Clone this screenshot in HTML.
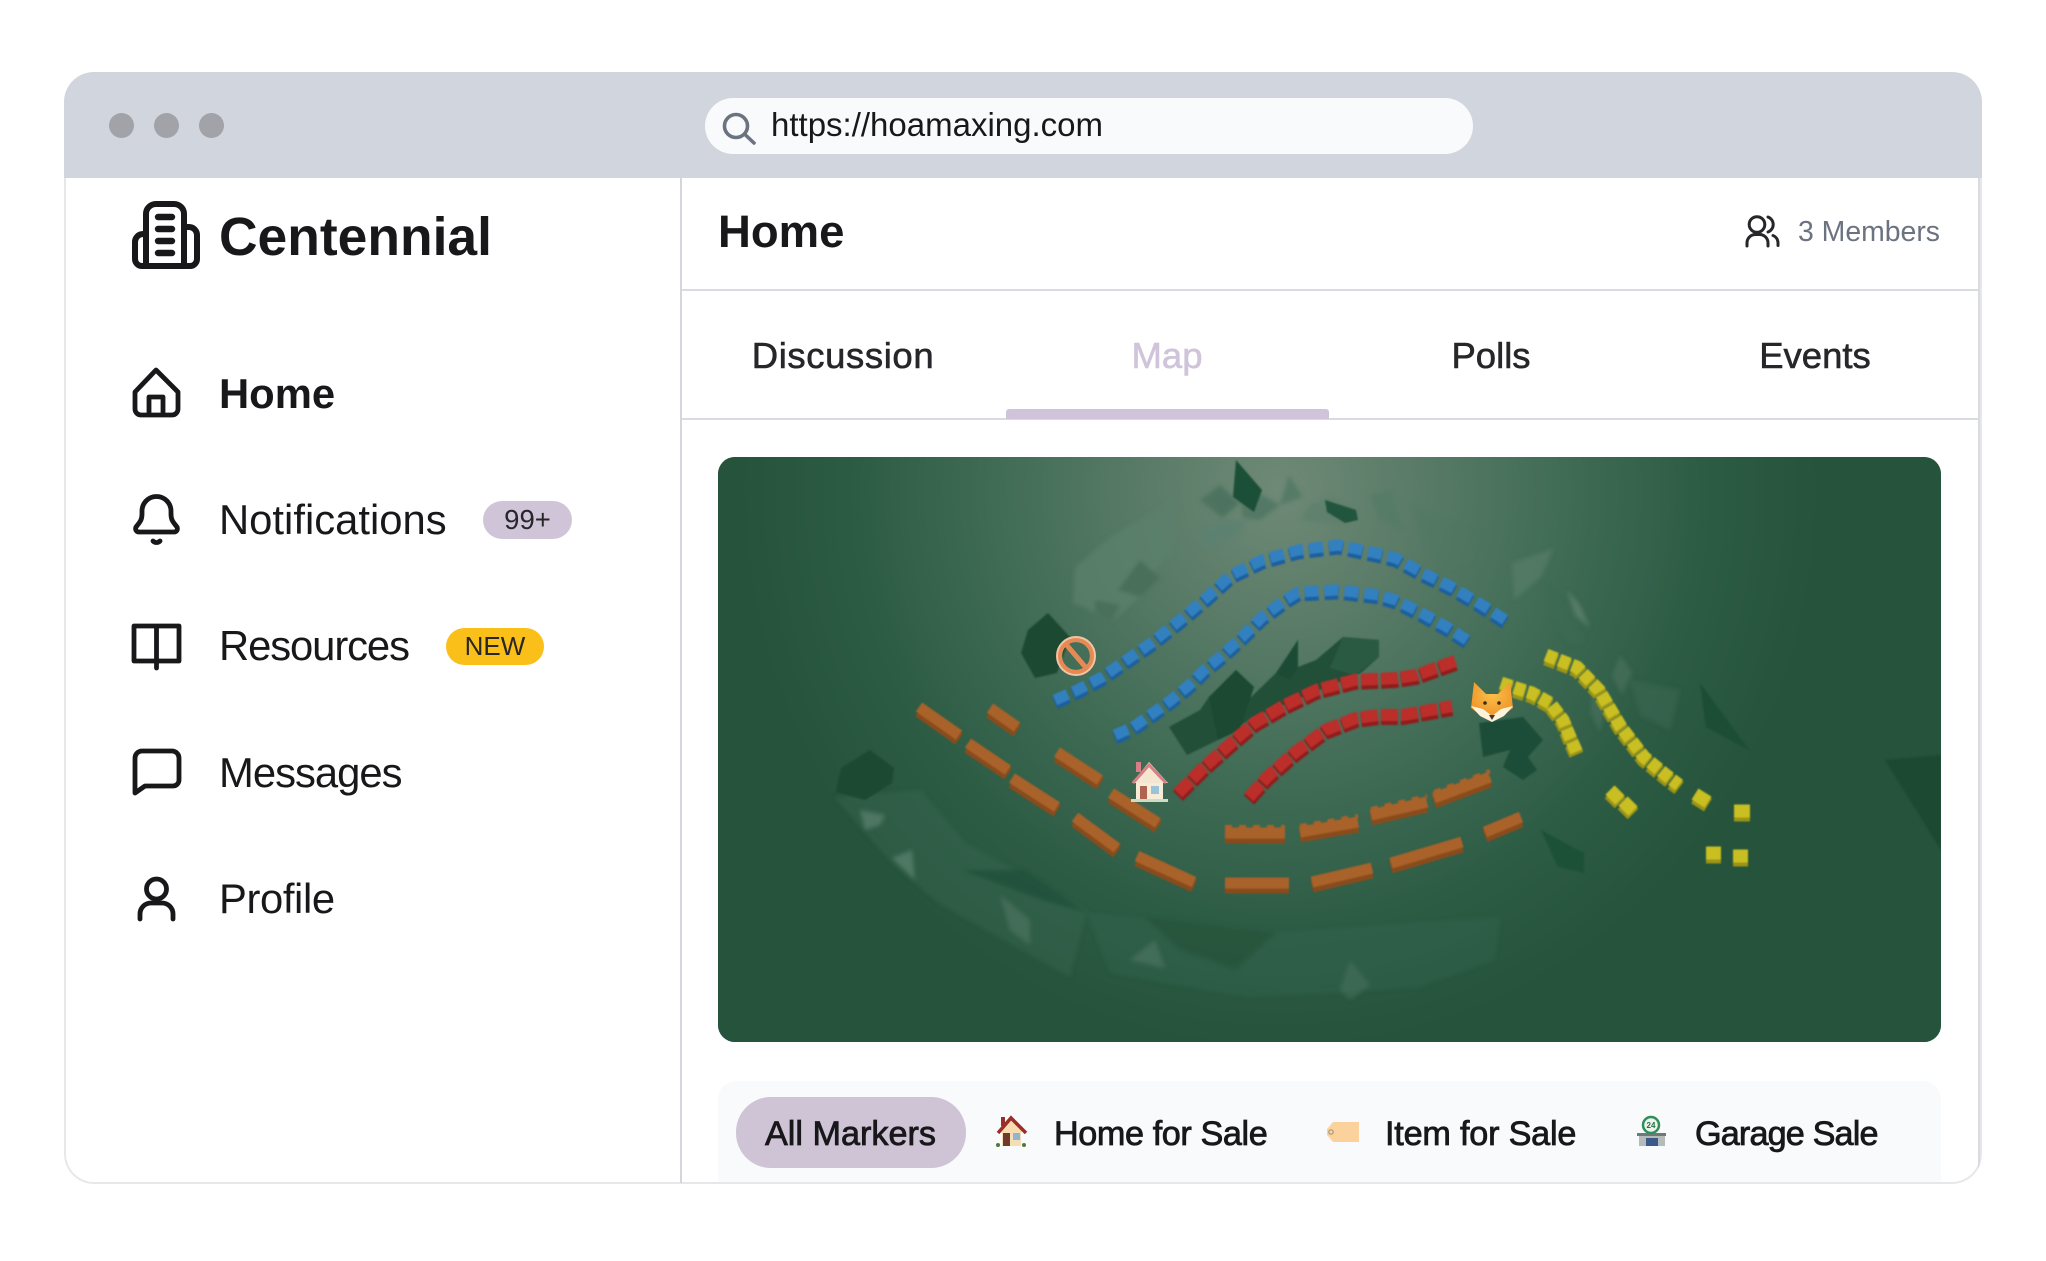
<!DOCTYPE html>
<html lang="en"><head><meta charset="utf-8"><title>Centennial</title>
<style>
html,body{margin:0;padding:0;width:2046px;height:1261px;background:#fff;overflow:hidden}
body{position:relative;font-family:"Liberation Sans",Arial,sans-serif;color:#111827}
.t{position:absolute;white-space:nowrap;line-height:60px;height:60px}
.c{text-align:center}
.nav{font-size:41.8px;left:219px;color:#18181b}
.tab{font-size:36.5px;-webkit-text-stroke:.6px currentColor;width:324px;top:326px}
.f{font-size:34.2px;top:1104px;-webkit-text-stroke:.8px #18181b;color:#18181b}
.abs{position:absolute}
svg.i{position:absolute;left:0;top:0;overflow:visible}
</style></head><body>

<div class="abs" style="left:64px;top:72px;width:1918px;height:1112px;border-radius:30px;overflow:hidden;background:#fff">
  <div class="abs" style="left:0;top:0;width:1918px;height:106px;background:#d1d5de"></div>
  <div class="abs" style="left:0;top:106px;width:1918px;height:1006px;box-sizing:border-box;border:2px solid #e5e7eb;border-top:none;border-radius:0 0 30px 30px"></div>
  <div class="abs" style="left:1914px;top:106px;width:2px;height:1004px;background:#d9dbe0"></div>
  <div class="abs" style="left:654px;top:1009px;width:1223px;height:101px;background:#f9fafb;border-radius:18px 18px 0 0"></div>
</div>

<div class="abs" style="left:109px;top:113px;width:25px;height:25px;border-radius:50%;background:#a1a3a9"></div>
<div class="abs" style="left:154px;top:113px;width:25px;height:25px;border-radius:50%;background:#a1a3a9"></div>
<div class="abs" style="left:199px;top:113px;width:25px;height:25px;border-radius:50%;background:#a1a3a9"></div>
<div class="abs" style="left:705px;top:98px;width:768px;height:56px;border-radius:28px;background:#f9fafb"></div>
<div class="t" style="left:771px;top:95px;font-size:33px;color:#18181b">https://hoamaxing.com</div>

<!-- dividers -->
<div class="abs" style="left:680px;top:178px;width:2px;height:1005px;background:#d4d6db"></div>
<div class="abs" style="left:682px;top:289px;width:1296px;height:2px;background:#d9dbe0"></div>
<div class="abs" style="left:682px;top:418px;width:1296px;height:2px;background:#d9dbe0"></div>
<div class="abs" style="left:1006px;top:409px;width:323px;height:10px;border-radius:3px 3px 0 0;background:#cfc4d9"></div>

<svg class="i" width="2046" height="1261" viewBox="0 0 2046 1261" fill="none" stroke="#18181b" stroke-width="4.8" stroke-linecap="round" stroke-linejoin="round">
  <!-- search -->
  <g stroke="#6b7280" stroke-width="3.600"><circle cx="736" cy="126" r="11.500"/><path d="M745 134.500L754 143"/></g>
  <!-- logo -->
  <g stroke-width="6">
    <path d="M146 265V214a10 10 0 0 1 10-10h18a10 10 0 0 1 10 10v51"/>
    <path d="M146 234h-3a8 8 0 0 0-8 8v17a7 7 0 0 0 7 7h48a7 7 0 0 0 7-7v-24a8 8 0 0 0-8-8h-5"/>
    <path d="M158 217h14M158 229h14M158 241h14M158 253h14" stroke-width="6.400"/>
  </g>
  <!-- home -->
  <path d="M135 392L156 370L178 392V409a6 6 0 0 1-6 6H141a6 6 0 0 1-6-6Z M149 414V397h14v17"/>
  <!-- bell -->
  <path d="M142 514V511a14.500 14.500 0 0 1 29 0V514c0 6 2 8 6 13 1 2 0 5-3 5H139c-3 0-4-3-3-5 4-5 6-7 6-13Z"/>
  <path d="M153 541c2 2 5 2 7 0"/>
  <!-- book -->
  <path d="M156.500 626H134V661H156.500H179V626H156.500V668"/>
  <!-- message -->
  <path d="M135 793V758a7 7 0 0 1 7-7H172a7 7 0 0 1 7 7V780a6 6 0 0 1-6 6H145Z"/>
  <!-- person -->
  <circle cx="156.500" cy="889" r="10"/>
  <path d="M140 919V914a11 11 0 0 1 11-11h11a11 11 0 0 1 11 11v5"/>
  <!-- members -->
  <g stroke="#27272a" stroke-width="3">
    <circle cx="1757" cy="224.500" r="7.800"/>
    <path d="M1768 217a8 8 0 0 1 0 15"/>
    <path d="M1747 246v-3a8.500 8.500 0 0 1 8.500-8.500h4a8.500 8.500 0 0 1 8.500 8.500v3"/>
    <path d="M1773 235.500a8 8 0 0 1 5 7v3"/>
  </g>
</svg>

<!-- sidebar -->
<div class="t" style="left:219px;top:208px;font-size:53.4px;font-weight:700;color:#18181b">Centennial</div>
<div class="t nav" style="top:364px;font-weight:700">Home</div>
<div class="t nav" style="top:490px">Notifications</div>
<div class="abs" style="left:483px;top:501px;width:89px;height:38px;border-radius:19px;background:#d0c5d8"></div>
<div class="t c" style="left:483px;width:89px;top:490px;font-size:27.500px;color:#27272a">99+</div>
<div class="t nav" style="top:616px;letter-spacing:-1.1px">Resources</div>
<div class="abs" style="left:446px;top:628px;width:98px;height:37px;border-radius:19px;background:#fbbf1a"></div>
<div class="t c" style="left:446px;width:98px;top:616px;font-size:26px;color:#27272a">NEW</div>
<div class="t nav" style="top:743px;letter-spacing:-1px">Messages</div>
<div class="t nav" style="top:869px;letter-spacing:-.4px">Profile</div>

<!-- header -->
<div class="t" style="left:718px;top:202px;font-size:45.500px;font-weight:700;color:#18181b">Home</div>
<div class="t" style="left:1798px;top:202px;font-size:28.400px;color:#6b7280">3 Members</div>

<!-- tabs -->
<div class="t c tab" style="left:681px;color:#27272a;letter-spacing:.6px">Discussion</div>
<div class="t c tab" style="left:1005px;color:#cfc4d9">Map</div>
<div class="t c tab" style="left:1329px;color:#27272a">Polls</div>
<div class="t c tab" style="left:1653px;color:#27272a">Events</div>

<!-- map -->
<svg class="abs" style="left:718px;top:457px" width="1223" height="585" viewBox="718 457 1223 585">
  <defs>
    <radialGradient id="g" gradientUnits="userSpaceOnUse" cx="0" cy="0" r="1" gradientTransform="translate(1280 490) scale(540 560)">
      <stop offset="0" stop-color="#6f8a77"/><stop offset=".22" stop-color="#5c7d69"/><stop offset=".5" stop-color="#426d57"/><stop offset=".78" stop-color="#2d5c45"/><stop offset="1" stop-color="#25533b"/>
    </radialGradient>
    <radialGradient id="fx" cx=".5" cy=".3" r=".7"><stop offset="0" stop-color="#fbc04a"/><stop offset="1" stop-color="#ec8c22"/></radialGradient>
    <clipPath id="r"><rect x="718" y="457" width="1223" height="585" rx="17"/></clipPath>
    <filter id="b1" x="-5%" y="-5%" width="110%" height="110%"><feGaussianBlur stdDeviation="2.200"/></filter>
    <filter id="b2" x="-5%" y="-5%" width="110%" height="110%"><feGaussianBlur stdDeviation=".7"/></filter>
  </defs>
  <g clip-path="url(#r)">
    <rect x="718" y="457" width="1223" height="585" fill="#24533b"/>
    <rect x="718" y="457" width="1223" height="585" fill="url(#g)"/>
    <g filter="url(#b1)">
    <!-- light rocks -->
    <polygon points="1075,567 1111,537 1151,513 1178,497 1173,553 1151,573 1140,597 1111,622 1084,607 1073,603" fill="#5c806d" opacity=".75"/>
    <polygon points="1118,590 1140,560 1160,578 1140,597" fill="#486e5a"/>
    <polygon points="1095,600 1120,605 1111,622 1095,612" fill="#4a705c"/>
    <polygon points="1200,500 1220,485 1240,503 1222,518" fill="#4d7360"/>
    <polygon points="1193,535 1222,520 1245,522 1236,537 1207,548" fill="#5d8170"/>
    <polygon points="1240,490 1262,495 1280,505 1260,520 1243,518" fill="#537865"/>
    <polygon points="1289,475 1303,497 1280,505" fill="#557a66"/>
    <polygon points="1330,497 1356,510 1345,523 1300,520 1310,505" fill="#5b7f6b" opacity=".7"/>
    <polygon points="1370,495 1392,490 1402,530 1380,520" fill="#547a66" opacity=".8"/>
    <polygon points="1412,505 1440,520 1480,535 1470,565 1440,570 1420,530" fill="#4e7561" opacity=".45"/>
    <polygon points="1512,563 1554,548 1541,577 1514,600" fill="#5c806d" opacity=".6"/>
    <polygon points="1541,577 1552,590 1586,640 1570,645 1555,620" fill="#3e6a54" opacity=".6"/>
    <polygon points="1567,590 1580,605 1590,628 1575,615" fill="#5f8472" opacity=".7"/>
    <polygon points="1592,690 1606,705 1600,732 1590,712" fill="#47705b" opacity=".7"/>
    <polygon points="1620,655 1632,672 1622,695 1612,675" fill="#48715c" opacity=".7"/>
    <polygon points="1630,680 1680,690 1670,730 1640,715" fill="#3d6752" opacity=".5"/>
    <!-- lower rocks -->
    <polygon points="834,797 921,790 966,843 1087,910 1070,977 938,903 892,863" fill="#3f6b56" opacity=".35"/>
    <polygon points="860,810 885,815 880,825 865,830" fill="#5b826f" opacity=".7"/>
    <polygon points="892,858 912,850 915,880" fill="#5d8471" opacity=".7"/>
    <polygon points="1000,895 1030,920 1030,945 1010,930" fill="#557d69" opacity=".5"/>
    <polygon points="961,870 1024,870 1087,913 1041,900" fill="#204f38" opacity=".7"/>
    <polygon points="1087,913 1276,933 1500,917 1495,960 1420,987 1334,993 1248,997 1110,973" fill="#3d6954" opacity=".3"/>
    <polygon points="1144,917 1276,933 1236,970 1179,950" fill="#24533b" opacity=".7"/>
    <polygon points="1130,960 1155,940 1165,968" fill="#4f7864" opacity=".6"/>
    <polygon points="1340,990 1350,960 1370,985 1350,1000" fill="#4a7360" opacity=".5"/>
    </g>
    <g filter="url(#b2)">
    <polygon points="1236,460 1262,490 1254,512 1233,497" fill="#1f5039"/>
    <polygon points="1325,500 1356,510 1358,520 1345,523 1327,512" fill="#22543d"/>
    <polygon points="1700,683 1749,750 1706,727" fill="#1f4d36"/>
    <polygon points="1885,760 1941,755 1941,850" fill="#1e4a33"/>
    <!-- dark rocks -->
    <polygon points="1048,613 1070,637 1057,673 1035,678 1021,653 1028,630" fill="#1c4a33"/>
    <polygon points="1169,727 1200,710 1209,697 1236,670 1254,687 1245,703 1276,673 1298,640 1298,667 1316,660 1343,637 1379,640 1379,657 1361,673 1254,717 1218,740 1187,755" fill="#234f39"/>
    <polygon points="1236,670 1254,687 1240,730 1218,740 1209,697" fill="#1b4a33"/>
    <polygon points="1343,637 1379,640 1379,657 1355,675 1330,668" fill="#2b5a43"/>
    <polygon points="1276,673 1298,640 1298,667 1290,680" fill="#1d4c35"/>
    <polygon points="1479,723 1523,717 1543,740 1528,757 1537,770 1523,780 1503,767 1510,750 1483,757" fill="#1f4d37"/>
    <polygon points="870,750 894,768 892,783 865,800 836,792 841,768" fill="#1d4a33"/>
    <polygon points="1541,830 1584,853 1584,873 1558,867" fill="#1f5139"/>
    </g>
    <!-- lines -->
    <g fill="none" stroke-linejoin="round" filter="url(#b2)">
      <!-- brown -->
      <g stroke="#8a4c1b" stroke-width="13" transform="translate(0 4)">
        <path d="M919 707L959 735M990 708L1017 727M968 743L1008 770M1012 778L1057 807M1057 752L1100 780M1111 793L1158 823M1075 817L1117 848M1137 856L1194 882M1225 833H1285M1300 832L1358 822M1371 815L1427 802M1434 798L1490 777M1485 832L1521 817M1225 883H1289M1312 882L1372 868M1391 863L1462 842"/>
      </g>
      <g stroke="#a9622a" stroke-width="11">
        <path d="M919 707L959 735M990 708L1017 727M968 743L1008 770M1012 778L1057 807M1057 752L1100 780M1111 793L1158 823M1075 817L1117 848M1137 856L1194 882M1225 833H1285M1300 832L1358 822M1371 815L1427 802M1434 798L1490 777M1485 832L1521 817M1225 883H1289M1312 882L1372 868M1391 863L1462 842"/>
      </g>
      <g stroke="#a9622a" stroke-width="4" stroke-dasharray="7 7" transform="translate(0 -6)">
        <path d="M1225 833H1285M1300 832L1358 822M1371 815L1427 802M1434 798L1490 777"/>
      </g>
      <!-- blue -->
      <g stroke="#1f5f9e" stroke-width="13" stroke-dasharray="14 6" transform="translate(0 3)">
        <path d="M1055 700L1077 690L1102 677L1122 663L1151 643L1180 620L1207 597L1231 575L1262 560L1298 550L1338 545L1376 553L1396 558L1423 573L1452 587L1479 603L1510 623"/>
        <path d="M1115 735L1133 727L1153 713L1171 700L1189 685L1204 670L1220 657L1242 637L1262 617L1285 600L1298 592L1338 590L1379 595L1396 600L1420 612L1447 627L1467 640"/>
      </g>
      <g stroke="#3180c0" stroke-width="11" stroke-dasharray="14 6">
        <path d="M1055 700L1077 690L1102 677L1122 663L1151 643L1180 620L1207 597L1231 575L1262 560L1298 550L1338 545L1376 553L1396 558L1423 573L1452 587L1479 603L1510 623"/>
        <path d="M1115 735L1133 727L1153 713L1171 700L1189 685L1204 670L1220 657L1242 637L1262 617L1285 600L1298 592L1338 590L1379 595L1396 600L1420 612L1447 627L1467 640"/>
      </g>
      <!-- red -->
      <g stroke="#8f1f1e" stroke-width="14" stroke-dasharray="17 3" transform="translate(0 3)">
        <path d="M1178 793L1204 767L1231 743L1254 723L1285 705L1316 690L1354 680L1396 678L1416 675L1458 660"/>
        <path d="M1249 797L1267 777L1294 753L1325 730L1356 718L1378 715L1403 715L1452 706"/>
      </g>
      <g stroke="#bb2f2c" stroke-width="12" stroke-dasharray="17 3">
        <path d="M1178 793L1204 767L1231 743L1254 723L1285 705L1316 690L1354 680L1396 678L1416 675L1458 660"/>
        <path d="M1249 797L1267 777L1294 753L1325 730L1356 718L1378 715L1403 715L1452 706"/>
      </g>
      <!-- yellow -->
      <g stroke="#9c9412" stroke-width="15" stroke-dasharray="11 3" transform="translate(0 3)">
        <path d="M1546 655L1577 667L1599 690L1621 727L1644 757L1666 775L1679 785"/>
        <path d="M1501 683L1519 689L1532 693L1550 703L1563 720L1570 737L1577 753"/>
      </g>
      <g stroke="#c9bf22" stroke-width="13" stroke-dasharray="11 3">
        <path d="M1546 655L1577 667L1599 690L1621 727L1644 757L1666 775L1679 785"/>
        <path d="M1501 683L1519 689L1532 693L1550 703L1563 720L1570 737L1577 753"/>
      </g>
      <g stroke="#9c9412" stroke-width="15" transform="translate(0 3)">
        <path d="M1695 794L1708 802M1734 811H1750M1610 790L1620 800M1623 801L1633 811M1706 853H1721M1733 856H1748"/>
      </g>
      <g stroke="#c9bf22" stroke-width="13">
        <path d="M1695 794L1708 802M1734 811H1750M1610 790L1620 800M1623 801L1633 811M1706 853H1721M1733 856H1748"/>
      </g>
    </g>
    <!-- no sign -->
    <g fill="none">
      <circle cx="1076" cy="656" r="17" stroke="#f2c4a6" stroke-width="6"/>
      <circle cx="1076" cy="656" r="16" stroke="#e58a54" stroke-width="4"/>
      <path d="M1065 643L1087 669" stroke="#e58a54" stroke-width="5"/>
    </g>
    <!-- house -->
    <g>
      <rect x="1136" y="782" width="27" height="20" fill="#f7ecd8"/>
      <polygon points="1149,762 1168,783 1132,783" fill="#f5e6d2"/>
      <path d="M1133 783L1149 765L1166 783" fill="none" stroke="#d77f86" stroke-width="3"/>
      <rect x="1136" y="762" width="5" height="10" fill="#d77f86"/>
      <rect x="1140" y="786" width="7" height="15" fill="#b0634e"/>
      <rect x="1151" y="786" width="8" height="8" fill="#9cc2d8"/>
      <rect x="1131" y="799" width="37" height="3" fill="#cfdcc4"/>
    </g>
    <!-- fox -->
    <g>
      <polygon points="1474,682 1486,694 1498,694 1510,682 1513,708 1504,715 1492,722 1480,715 1471,708" fill="url(#fx)"/>
      <polygon points="1471,706 1483,709 1492,716 1501,709 1513,706 1504,716 1492,722 1480,716" fill="#fdf2dc"/>
      <circle cx="1485" cy="703" r="1.800" fill="#3a2a1a"/><circle cx="1499" cy="703" r="1.800" fill="#3a2a1a"/>
      <polygon points="1489,715 1495,715 1492,720" fill="#4a3526"/>
    </g>
  </g>
</svg>

<!-- filter bar -->
<div class="abs" style="left:736px;top:1097px;width:230px;height:71px;border-radius:35px;background:#cfc4d6"></div>
<div class="t" style="left:765px;top:1104px;font-size:34.2px;-webkit-text-stroke:.8px #18181b;color:#18181b">All Markers</div>
<div class="t f" style="left:1054px;letter-spacing:-.4px">Home for Sale</div>
<div class="t f" style="left:1385px;letter-spacing:-.2px">Item for Sale</div>
<div class="t f" style="left:1695px;letter-spacing:-.85px">Garage Sale</div>

<svg class="i" width="2046" height="1261" viewBox="0 0 2046 1261">
  <!-- house emoji -->
  <rect x="1002" y="1131" width="19" height="15" fill="#f5deb3"/>
  <polygon points="1012,1118 1024,1132 1000,1132" fill="#f8dcb0"/>
  <path d="M998 1133L1011 1118L1026 1133" fill="none" stroke="#9a2f2a" stroke-width="3.500"/>
  <rect x="1001" y="1117" width="4" height="9" fill="#9a2f2a"/>
  <rect x="1003" y="1133" width="7" height="13" fill="#6e3b2a"/>
  <rect x="1013" y="1133" width="7" height="7" fill="#8fb4d4"/>
  <circle cx="998" cy="1145" r="2" fill="#4d7a3a"/><circle cx="1024" cy="1145" r="2" fill="#4d7a3a"/>
  <!-- tag emoji -->
  <path d="M1333 1122H1359V1142H1333L1327 1135V1129Z" fill="#fbd29b"/>
  <circle cx="1331" cy="1132" r="2.200" fill="none" stroke="#a69a86" stroke-width="1.200"/>
  <!-- store emoji -->
  <rect x="1639" y="1134" width="26" height="12" fill="#b5bcb8"/>
  <rect x="1637" y="1133" width="29" height="3" fill="#6d7a76"/>
  <rect x="1646" y="1138" width="12" height="8" fill="#3b5a8a"/>
  <circle cx="1651" cy="1125" r="8" fill="#eaf5ea" stroke="#2f8f5a" stroke-width="2.500"/>
  <text x="1651" y="1128" font-size="8" font-weight="700" text-anchor="middle" font-family="Liberation Sans" fill="#2f6a4a">24</text>
</svg>
</body></html>
